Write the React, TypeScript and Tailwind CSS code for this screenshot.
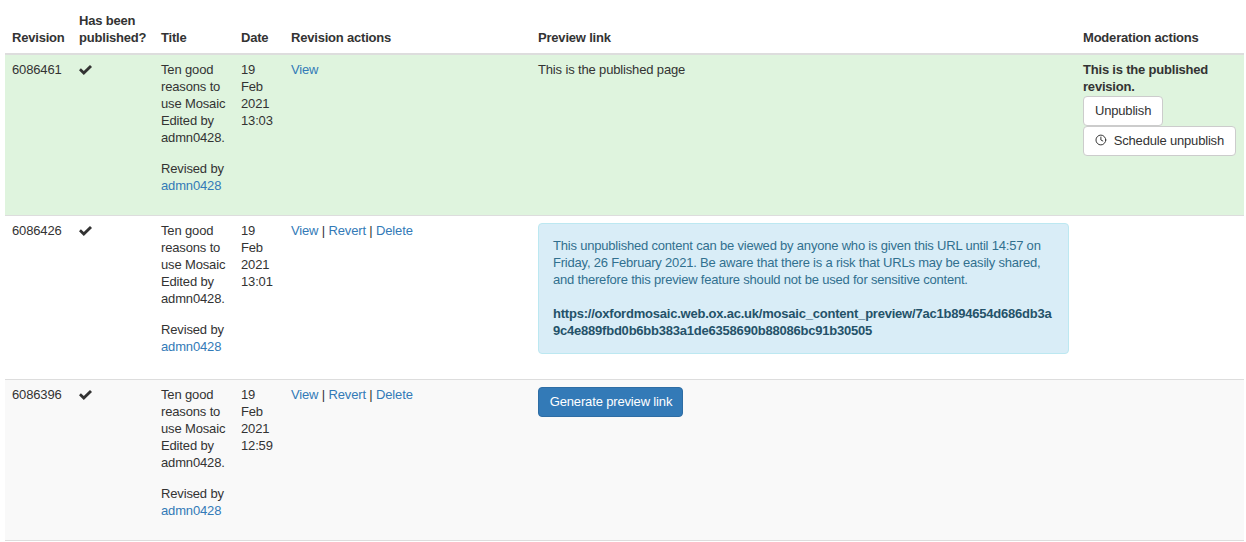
import React from 'react';
import { Clock } from 'lucide-react';

const link = 'text-[#337ab7]';
const cell = 'px-[7px] pt-[6px] pb-[7px] align-top';
const head = 'px-[7px] pb-[7px] pt-[7px] align-bottom text-left font-bold tracking-[-0.2px]';

const Check = () => (
  <svg width="13" height="10" viewBox="0 0 13 10" className="mt-[4px] block fill-[#333]">
    <path d="M0 5.2 L1.9 3.2 L4.8 5.9 L11 0 L13 2 L4.8 10 Z" />
  </svg>
);

const TitleCell = () => (
  <td className={cell}>
    <p className="mb-[14px]">
      Ten good reasons to use Mosaic
      <br />
      Edited by admn0428.
    </p>
    <p className="mb-[14px]">
      Revised by <a className={link}>admn0428</a>
    </p>
  </td>
);

const DateCell = ({ time }: { time: string }) => <td className={cell}>19 Feb 2021 {time}</td>;

const Actions = () => (
  <td className={cell}>
    <a className={link}>View</a> | <a className={link}>Revert</a> | <a className={link}>Delete</a>
  </td>
);

const btn = 'block h-[30px] rounded-[4px] border border-[#ccc] bg-white px-[11px] pb-[2px] text-[#333] whitespace-nowrap tracking-[-0.18px]';

export default function App() {
  return (
    <div className="min-h-[542px] bg-white px-[5px] pt-[5px] font-['Liberation_Sans',Arial,sans-serif] text-[13px] leading-[17px] tracking-[-0.15px] text-[#333]">
      <table className="w-[1239px] table-fixed border-collapse">
        <colgroup>
          <col className="w-[67px]" />
          <col className="w-[82px]" />
          <col className="w-[80px]" />
          <col className="w-[50px]" />
          <col className="w-[247px]" />
          <col className="w-[545px]" />
          <col className="w-[168px]" />
        </colgroup>
        <thead>
          <tr className="border-b-2 border-[#ddd]">
            <th className={head}>Revision</th>
            <th className={head}>Has been published?</th>
            <th className={head}>Title</th>
            <th className={head}>Date</th>
            <th className={head}>Revision actions</th>
            <th className={head}>Preview link</th>
            <th className={head}>Moderation actions</th>
          </tr>
        </thead>
        <tbody>
          <tr className="border-b border-[#ddd] bg-[#dff4de]">
            <td className={cell}>6086461</td>
            <td className={cell}><Check /></td>
            <TitleCell />
            <DateCell time="13:03" />
            <td className={cell}><a className={link}>View</a></td>
            <td className={cell}>This is the published page</td>
            <td className={cell}>
              <strong className="tracking-[-0.2px]">This is the published revision.</strong>
              <button className={`${btn} mt-[1px]`}>Unpublish</button>
              <button className={`${btn} flex w-[153px] items-center gap-[7px]`}>
                <Clock size={14} strokeWidth={2} />
                Schedule unpublish
              </button>
            </td>
          </tr>
          <tr className="border-b border-[#ddd]">
            <td className={cell}>6086426</td>
            <td className={cell}><Check /></td>
            <TitleCell />
            <DateCell time="13:01" />
            <Actions />
            <td className={cell}>
              <div className="mt-[1px] mb-[18px] rounded-[4px] border border-[#bce8f1] bg-[#d9edf7] px-[14px] pt-[13px] pb-[14px] tracking-[-0.2px] text-[#31708f]">
                <p className="mb-[17px]">
                  This unpublished content can be viewed by anyone who is given this URL until 14:57 on Friday, 26 February 2021. Be aware that there is a risk that URLs may be easily shared, and therefore this preview feature should not be used for sensitive content.
                </p>
                <p className="break-all font-bold tracking-[-0.22px] text-[#245269]">
                  https://oxfordmosaic.web.ox.ac.uk/mosaic_content_preview/7ac1b894654d686db3a9c4e889fbd0b6bb383a1de6358690b88086bc91b30505
                </p>
              </div>
            </td>
            <td className={cell}></td>
          </tr>
          <tr className="border-b border-[#ddd] bg-[#f9f9f9]">
            <td className={cell}>6086396</td>
            <td className={cell}><Check /></td>
            <TitleCell />
            <DateCell time="12:59" />
            <Actions />
            <td className={cell}>
              <button className="mt-[1px] h-[30px] w-[145px] rounded-[4px] border border-[#2e6da4] bg-[#337ab7] pb-[1px] pl-[1px] text-white">
                Generate preview link
              </button>
            </td>
            <td className={cell}></td>
          </tr>
        </tbody>
      </table>
    </div>
  );
}
